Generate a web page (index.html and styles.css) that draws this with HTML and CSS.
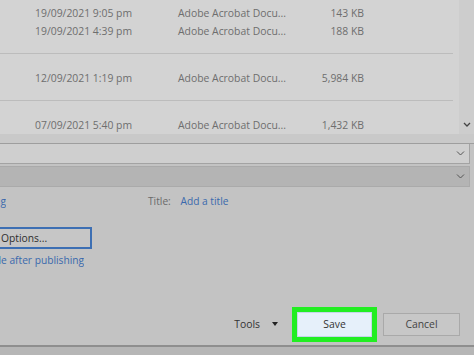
FILE: index.html
```
<!DOCTYPE html>
<html lang="en">
<head>
  <meta charset="UTF-8" />
  <meta name="viewport" content="width=device-width, initial-scale=1.0"/>
  <title>Publish as PDF</title>
  <link rel="stylesheet" href="styles.css">
</head>
<body>

  <div class="lista">
    <div class="linhas">
      <div class="grupo primeiro">
        <div class="linha"><span>19/09/2021 9:05 pm</span><span>Adobe Acrobat Docu...</span><span class="tam">143 KB</span></div>
        <div class="linha"><span>19/09/2021 4:39 pm</span><span>Adobe Acrobat Docu...</span><span class="tam">188 KB</span></div>
      </div>
      <div class="grupo">
        <div class="linha"><span>12/09/2021 1:19 pm</span><span>Adobe Acrobat Docu...</span><span class="tam">5,984 KB</span></div>
      </div>
      <div class="grupo ultimo">
        <div class="linha"><span>07/09/2021 5:40 pm</span><span>Adobe Acrobat Docu...</span><span class="tam">1,432 KB</span></div>
      </div>
    </div>
    <div class="rolagem">
      <svg width="8" height="5" viewBox="0 0 8 5"><path d="M1 1l3 3 3-3" fill="none" stroke="#444" stroke-width="1.3"/></svg>
    </div>
  </div>
  <div class="faixa"></div>

  <div class="campo claro">
    <svg width="9" height="5" viewBox="0 0 9 5"><path d="M1 .5l3.5 3.5 3.5-3.5" fill="none" stroke="#555" stroke-width="1"/></svg>
  </div>
  <div class="campo escuro">
    <svg width="9" height="5" viewBox="0 0 9 5"><path d="M1 .5l3.5 3.5 3.5-3.5" fill="none" stroke="#555" stroke-width="1"/></svg>
  </div>

  <div class="meta">
    <div class="esquerda">
      <div class="corte tag"><span class="link">Add a tag</span></div>
      <div class="corte"><button class="opcoes">Options...</button></div>
      <div class="corte abrir"><span class="link">Open file after publishing</span></div>
    </div>
    <div class="titulo">
      <span class="rotulo">Title:</span>
      <span class="link">Add a title</span>
    </div>
  </div>

  <div class="rodape">
    <span class="ferramentas">Tools</span>
    <span class="seta"></span>
    <div class="destaque"><button class="salvar">Save</button></div>
    <button class="cancelar">Cancel</button>
  </div>
  <div class="base"></div>

</body>
</html>
```

FILE: styles.css
```
body {
  margin: 0;
  width: 474px;
  height: 355px;
  overflow: hidden;
  display: flex;
  flex-direction: column;
  background-color: #c3c3c3;
  font-family: "Open Sans", "Noto Sans", sans-serif;
  font-size: 10.4px;
}

.lista {
  display: flex;
  height: 134px;
  flex-shrink: 0;
  background-color: #d3d3d3;
  overflow: hidden;
}

.linhas {
  flex: 1;
}

.grupo {
  padding: 15px 0 13px;
  margin-right: 6px;
  border-bottom: 1px solid #bcbcbc;
}

.grupo.primeiro {
  padding-top: 4px;
}

.grupo.ultimo {
  border-bottom: none;
}

.linha {
  display: grid;
  grid-template-columns: 143px 122px 64px;
  padding-left: 35px;
  height: 18px;
  line-height: 18px;
  color: #6e6e6e;
  white-space: nowrap;
}

.tam {
  text-align: right;
}

.rolagem {
  width: 15px;
  background-color: #cdcdcd;
  display: flex;
  align-items: flex-end;
  justify-content: center;
  padding-bottom: 7px;
  box-sizing: border-box;
}

.faixa {
  height: 9px;
  flex-shrink: 0;
  background-color: #c9c9c9;
  border-bottom: 1px solid #9e9e9e;
}

.campo {
  height: 19px;
  flex-shrink: 0;
  margin-right: 4px;
  border: 1px solid #a3a3a3;
  border-left: none;
  display: flex;
  align-items: center;
  justify-content: flex-end;
  padding-right: 4px;
}

.campo.claro {
  background-color: #cfcfcf;
  border-top: none;
}

.campo.escuro {
  margin-top: 2px;
  background-color: #b4b4b4;
  border-color: #aaaaaa;
}

.meta {
  display: flex;
  padding-top: 6px;
}

.esquerda {
  width: 92px;
}

.corte {
  display: flex;
  justify-content: flex-end;
  overflow: hidden;
  white-space: nowrap;
  line-height: 16px;
}

.corte > * {
  flex-shrink: 0;
}

.tag {
  width: 6px;
}

.abrir {
  width: 84px;
  margin-top: 3px;
}

.link {
  color: #3a69ad;
  font-size: 10.2px;
}

.opcoes {
  margin-top: 18px;
  width: 130px;
  height: 22px;
  padding: 0 0 0 37px;
  text-align: left;
  background-color: #c6c6c6;
  border: 2px solid #3d6fb3;
  font-family: inherit;
  font-size: 10.3px;
  color: #2e2e2e;
}

.titulo {
  margin-left: 56px;
  line-height: 16px;
}

.rotulo {
  color: #6a6a6a;
  font-size: 10.2px;
  margin-right: 7px;
}

.rodape {
  display: flex;
  align-items: center;
  justify-content: flex-end;
  height: 38px;
  margin-top: auto;
  padding-right: 14px;
  padding-bottom: 2px;
}

.ferramentas {
  color: #333;
  font-size: 10.4px;
}

.seta {
  width: 0;
  height: 0;
  margin: 0 14px 0 12px;
  border-left: 3.5px solid transparent;
  border-right: 3.5px solid transparent;
  border-top: 4px solid #222;
}

.destaque {
  background-color: #22ee22;
  padding: 5px;
  margin-right: 6px;
}

button {
  font-family: inherit;
  cursor: pointer;
}

.salvar {
  display: block;
  width: 75px;
  height: 25px;
  background-color: #e6f0fa;
  border: 1px solid #c5d6e8;
  color: #333;
  font-size: 10.4px;
}

.cancelar {
  width: 77px;
  height: 23px;
  background-color: #c7c7c7;
  border: 1px solid #a9a9a9;
  color: #444;
  font-size: 10.4px;
}

.base {
  height: 8px;
  flex-shrink: 0;
  border-top: 2px solid #8e8e8e;
  background-color: #b6b6b6;
}
```
